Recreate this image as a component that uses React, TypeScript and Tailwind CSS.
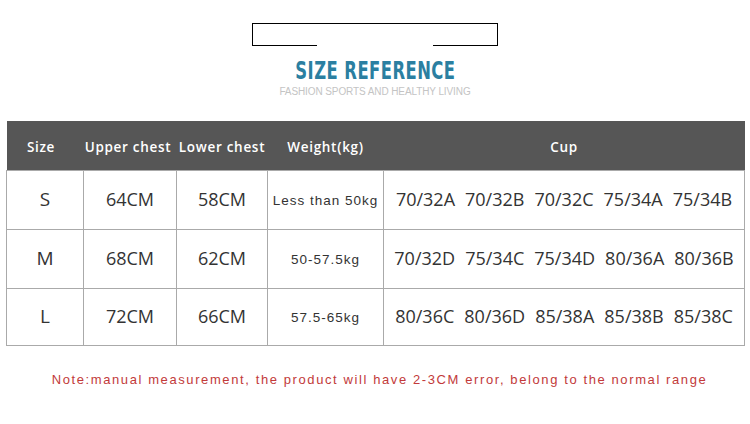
const rows = [
  { size: 'S', upper: '64CM', lower: '58CM', weight: 'Less than 50kg', cups: ['70/32A', '70/32B', '70/32C', '75/34A', '75/34B'] },
  { size: 'M', upper: '68CM', lower: '62CM', weight: '50-57.5kg', cups: ['70/32D', '75/34C', '75/34D', '80/36A', '80/36B'] },
  { size: 'L', upper: '72CM', lower: '66CM', weight: '57.5-65kg', cups: ['80/36C', '80/36D', '85/38A', '85/38B', '85/38C'] },
];

export default function App() {
  return (
    <div className="w-[750px] h-[424px] bg-white overflow-hidden font-['Liberation_Sans',sans-serif]">
      {/* title block */}
      <div className="flex flex-col items-center pt-[23px]">
        <div className="relative w-[246px] h-[23px] border-[1.5px] border-black">
          <div className="absolute left-[64px] right-[64px] -bottom-[2px] h-[3px] bg-white" />
        </div>
        <div className="mt-[13px] text-[24px] leading-[24px] font-bold text-[#2b7fa1] tracking-[0.6px] font-['DejaVu_Sans_Condensed',sans-serif] scale-x-[0.76] scale-y-[1.04]">
          SIZE REFERENCE
        </div>
        <div className="mt-[3px] text-[10px] leading-[12px] text-[#c4c4c4] tracking-[-0.1px]">
          FASHION SPORTS AND HEALTHY LIVING
        </div>
      </div>

      <table className="ml-[6px] mt-[23px] w-[739px] border-collapse table-fixed">
        <colgroup>
          <col className="w-[77px]" />
          <col className="w-[93px]" />
          <col className="w-[91px]" />
          <col className="w-[116px]" />
          <col />
        </colgroup>
        <thead>
          <tr className="h-[49px] bg-[#565656] text-white text-[13.5px] tracking-[0.7px] font-['Open_Sans',sans-serif]">
            <th className="font-semibold pt-[3px] pr-[8px]">Size</th>
            <th className="font-semibold pt-[3px] pr-[4px]">Upper chest</th>
            <th className="font-semibold pt-[3px]">Lower chest</th>
            <th className="font-semibold pt-[3px]">Weight(kg)</th>
            <th className="font-semibold pt-[3px]">Cup</th>
          </tr>
        </thead>
        <tbody className="text-[#333] font-['Open_Sans',sans-serif]">
          {rows.map((r, i) => (
            <tr key={r.size} className={i === 2 ? 'h-[57px]' : 'h-[59px]'}>
              <td className="border border-[#aaa] text-center text-[19px]">{r.size}</td>
              <td className="border border-[#aaa] text-center text-[18px]">{r.upper}</td>
              <td className="border border-[#aaa] text-center text-[18px]">{r.lower}</td>
              <td className="border border-[#aaa] text-center text-[13.5px] tracking-[1px] font-['Liberation_Sans',sans-serif] pt-[4px]">{r.weight}</td>
              <td className="border border-[#aaa] text-center text-[18px]">
                <div className="flex justify-center gap-[10px]">
                  {r.cups.map(c => <span key={c}>{c}</span>)}
                </div>
              </td>
            </tr>
          ))}
        </tbody>
      </table>

      <p className="mt-[24px] pl-[9px] text-center text-[13px] text-[#c23a3a] tracking-[1.6px]">
        Note:manual measurement, the product will have 2-3CM error, belong to the normal range
      </p>
    </div>
  );
}
